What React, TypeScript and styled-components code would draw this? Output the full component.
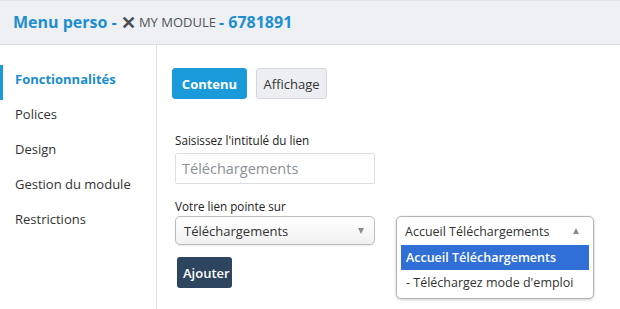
import React from "react";
import styled, { createGlobalStyle } from "styled-components";

const Global = createGlobalStyle`
  html, body { margin: 0; padding: 0; background: #fff; }
  body { font-family: "Open Sans", "Noto Sans", sans-serif; color: #333; }
  * { box-sizing: border-box; }
`;

const Page = styled.div`
  width: 620px;
  height: 309px;
  display: flex;
  flex-direction: column;
  overflow: hidden;
`;

const Header = styled.header`
  height: 45px;
  flex: none;
  background: #eef0f3;
  border-top: 1px solid #e2e5e8;
  border-bottom: 1px solid #d9dde1;
  display: flex;
  align-items: center;
  padding: 0 0 2px 13px;
  white-space: pre;
`;

const Title = styled.span`
  color: #1d8fd1;
  font-weight: 700;
  font-size: 16px;
`;

const Cross = styled.span`
  color: #4a4f55;
  font-weight: 700;
  font-size: 18px;
  line-height: 1;
  margin: 0 3px 0 0;
`;

const ModuleName = styled.span`
  color: #50555b;
  font-size: 13px;
  text-transform: uppercase;
  margin-right: 3px;
`;

const Body = styled.div`
  flex: 1;
  display: flex;
`;

const Sidebar = styled.nav`
  width: 157px;
  flex: none;
  border-right: 1px solid #dfe2e6;
  padding-top: 20px;
  display: flex;
  flex-direction: column;
`;

const NavItem = styled.div<{ $active?: boolean }>`
  height: 35px;
  display: flex;
  align-items: center;
  font-size: 13px;
  padding-bottom: 7px;
  padding-left: ${(p) => (p.$active ? "12px" : "15px")};
  border-left: ${(p) => (p.$active ? "3px solid #1a9ad8" : "none")};
  color: ${(p) => (p.$active ? "#1a8dcc" : "#333")};
  font-weight: ${(p) => (p.$active ? 700 : 400)};
`;

const Main = styled.main`
  flex: 1;
  padding: 23px 0 0 15px;
  display: flex;
  flex-direction: column;
`;

const Tabs = styled.div`
  display: flex;
  gap: 9px;
`;

const Tab = styled.button<{ $active?: boolean }>`
  height: 31px;
  width: ${(p) => (p.$active ? "75px" : "71px")};
  padding: 0;
  border-radius: 3px;
  font-family: inherit;
  font-size: 13px;
  font-weight: ${(p) => (p.$active ? 700 : 400)};
  color: ${(p) => (p.$active ? "#fff" : "#333")};
  background: ${(p) => (p.$active ? "#1a9ad8" : "#eceef1")};
  border: 1px solid ${(p) => (p.$active ? "#1a9ad8" : "#d3d7db")};
`;

const Form = styled.div`
  padding: 32px 0 0 3px;
  display: flex;
  flex-direction: column;
`;

const Label = styled.div<{ $gap: number }>`
  font-size: 11.7px;
  font-weight: 500;
  line-height: 18px;
  color: #222;
  margin-bottom: ${(p) => p.$gap}px;
`;

const TextInput = styled.div`
  width: 200px;
  height: 31px;
  border: 1px solid #dcdfe3;
  border-radius: 2px;
  display: flex;
  align-items: center;
  padding-left: 6px;
  font-size: 14.5px;
  color: #8a9097;
  margin-bottom: 13px;
`;

const Row = styled.div`
  display: flex;
  align-items: flex-start;
  gap: 21px;
`;

const Col = styled.div`
  display: flex;
  flex-direction: column;
`;

const Select = styled.div`
  width: 200px;
  height: 29px;
  border: 1px solid #b9bcc0;
  border-radius: 5px;
  background: linear-gradient(#ffffff, #f1f1f1);
  display: flex;
  align-items: center;
  justify-content: space-between;
  padding: 0 10px 0 8px;
  font-size: 13px;
  color: #333;
  box-shadow: 0 1px 1px rgba(0, 0, 0, 0.08);
`;

const Arrow = styled.span<{ $up?: boolean }>`
  width: 0;
  height: 0;
  border-left: 3.5px solid transparent;
  border-right: 3.5px solid transparent;
  ${(p) =>
    p.$up
      ? "border-bottom: 6px solid #8c8c8c;"
      : "border-top: 6px solid #8c8c8c;"}
`;

const Button = styled.button`
  margin: 12px 0 0 2px;
  width: 55px;
  height: 31px;
  background: #2e4560;
  border: none;
  border-radius: 3px;
  color: #fff;
  font-family: inherit;
  font-size: 13px;
  font-weight: 600;
`;

const ListBox = styled.div`
  width: 198px;
  height: 83px;
  border: 1px solid #b3b3b3;
  border-radius: 5px;
  background: #fff;
  box-shadow: 0 1px 3px rgba(0, 0, 0, 0.2);
  display: flex;
  flex-direction: column;
  padding: 0 4px;
`;

const ListHead = styled.div`
  height: 28px;
  display: flex;
  align-items: center;
  justify-content: space-between;
  padding: 0 10px 0 4px;
  font-size: 12.5px;
  color: #333;
`;

const Option = styled.div<{ $selected?: boolean }>`
  height: 25px;
  display: flex;
  align-items: center;
  padding-left: 5px;
  font-size: 12.5px;
  color: ${(p) => (p.$selected ? "#fff" : "#333")};
  background: ${(p) => (p.$selected ? "#2f6fd6" : "transparent")};
  font-weight: ${(p) => (p.$selected ? 600 : 400)};
`;

const nav = ["Fonctionnalités", "Polices", "Design", "Gestion du module", "Restrictions"];

export default function App() {
  return (
    <Page>
      <Global />
      <Header>
        <Title>Menu perso - </Title>
        <Cross>✕</Cross>
        <ModuleName>My module</ModuleName>
        <Title>- 6781891</Title>
      </Header>
      <Body>
        <Sidebar>
          {nav.map((n, i) => (
            <NavItem key={n} $active={i === 0}>
              {n}
            </NavItem>
          ))}
        </Sidebar>
        <Main>
          <Tabs>
            <Tab $active>Contenu</Tab>
            <Tab>Affichage</Tab>
          </Tabs>
          <Form>
            <Label $gap={4}>Saisissez l'intitulé du lien</Label>
            <TextInput>Téléchargements</TextInput>
            <Label $gap={1}>Votre lien pointe sur</Label>
            <Row>
              <Col>
                <Select>
                  <span>Téléchargements</span>
                  <Arrow />
                </Select>
                <Button>Ajouter</Button>
              </Col>
              <ListBox>
                <ListHead>
                  <span>Accueil Téléchargements</span>
                  <Arrow $up />
                </ListHead>
                <Option $selected>Accueil Téléchargements</Option>
                <Option>- Téléchargez mode d'emploi</Option>
              </ListBox>
            </Row>
          </Form>
        </Main>
      </Body>
    </Page>
  );
}
